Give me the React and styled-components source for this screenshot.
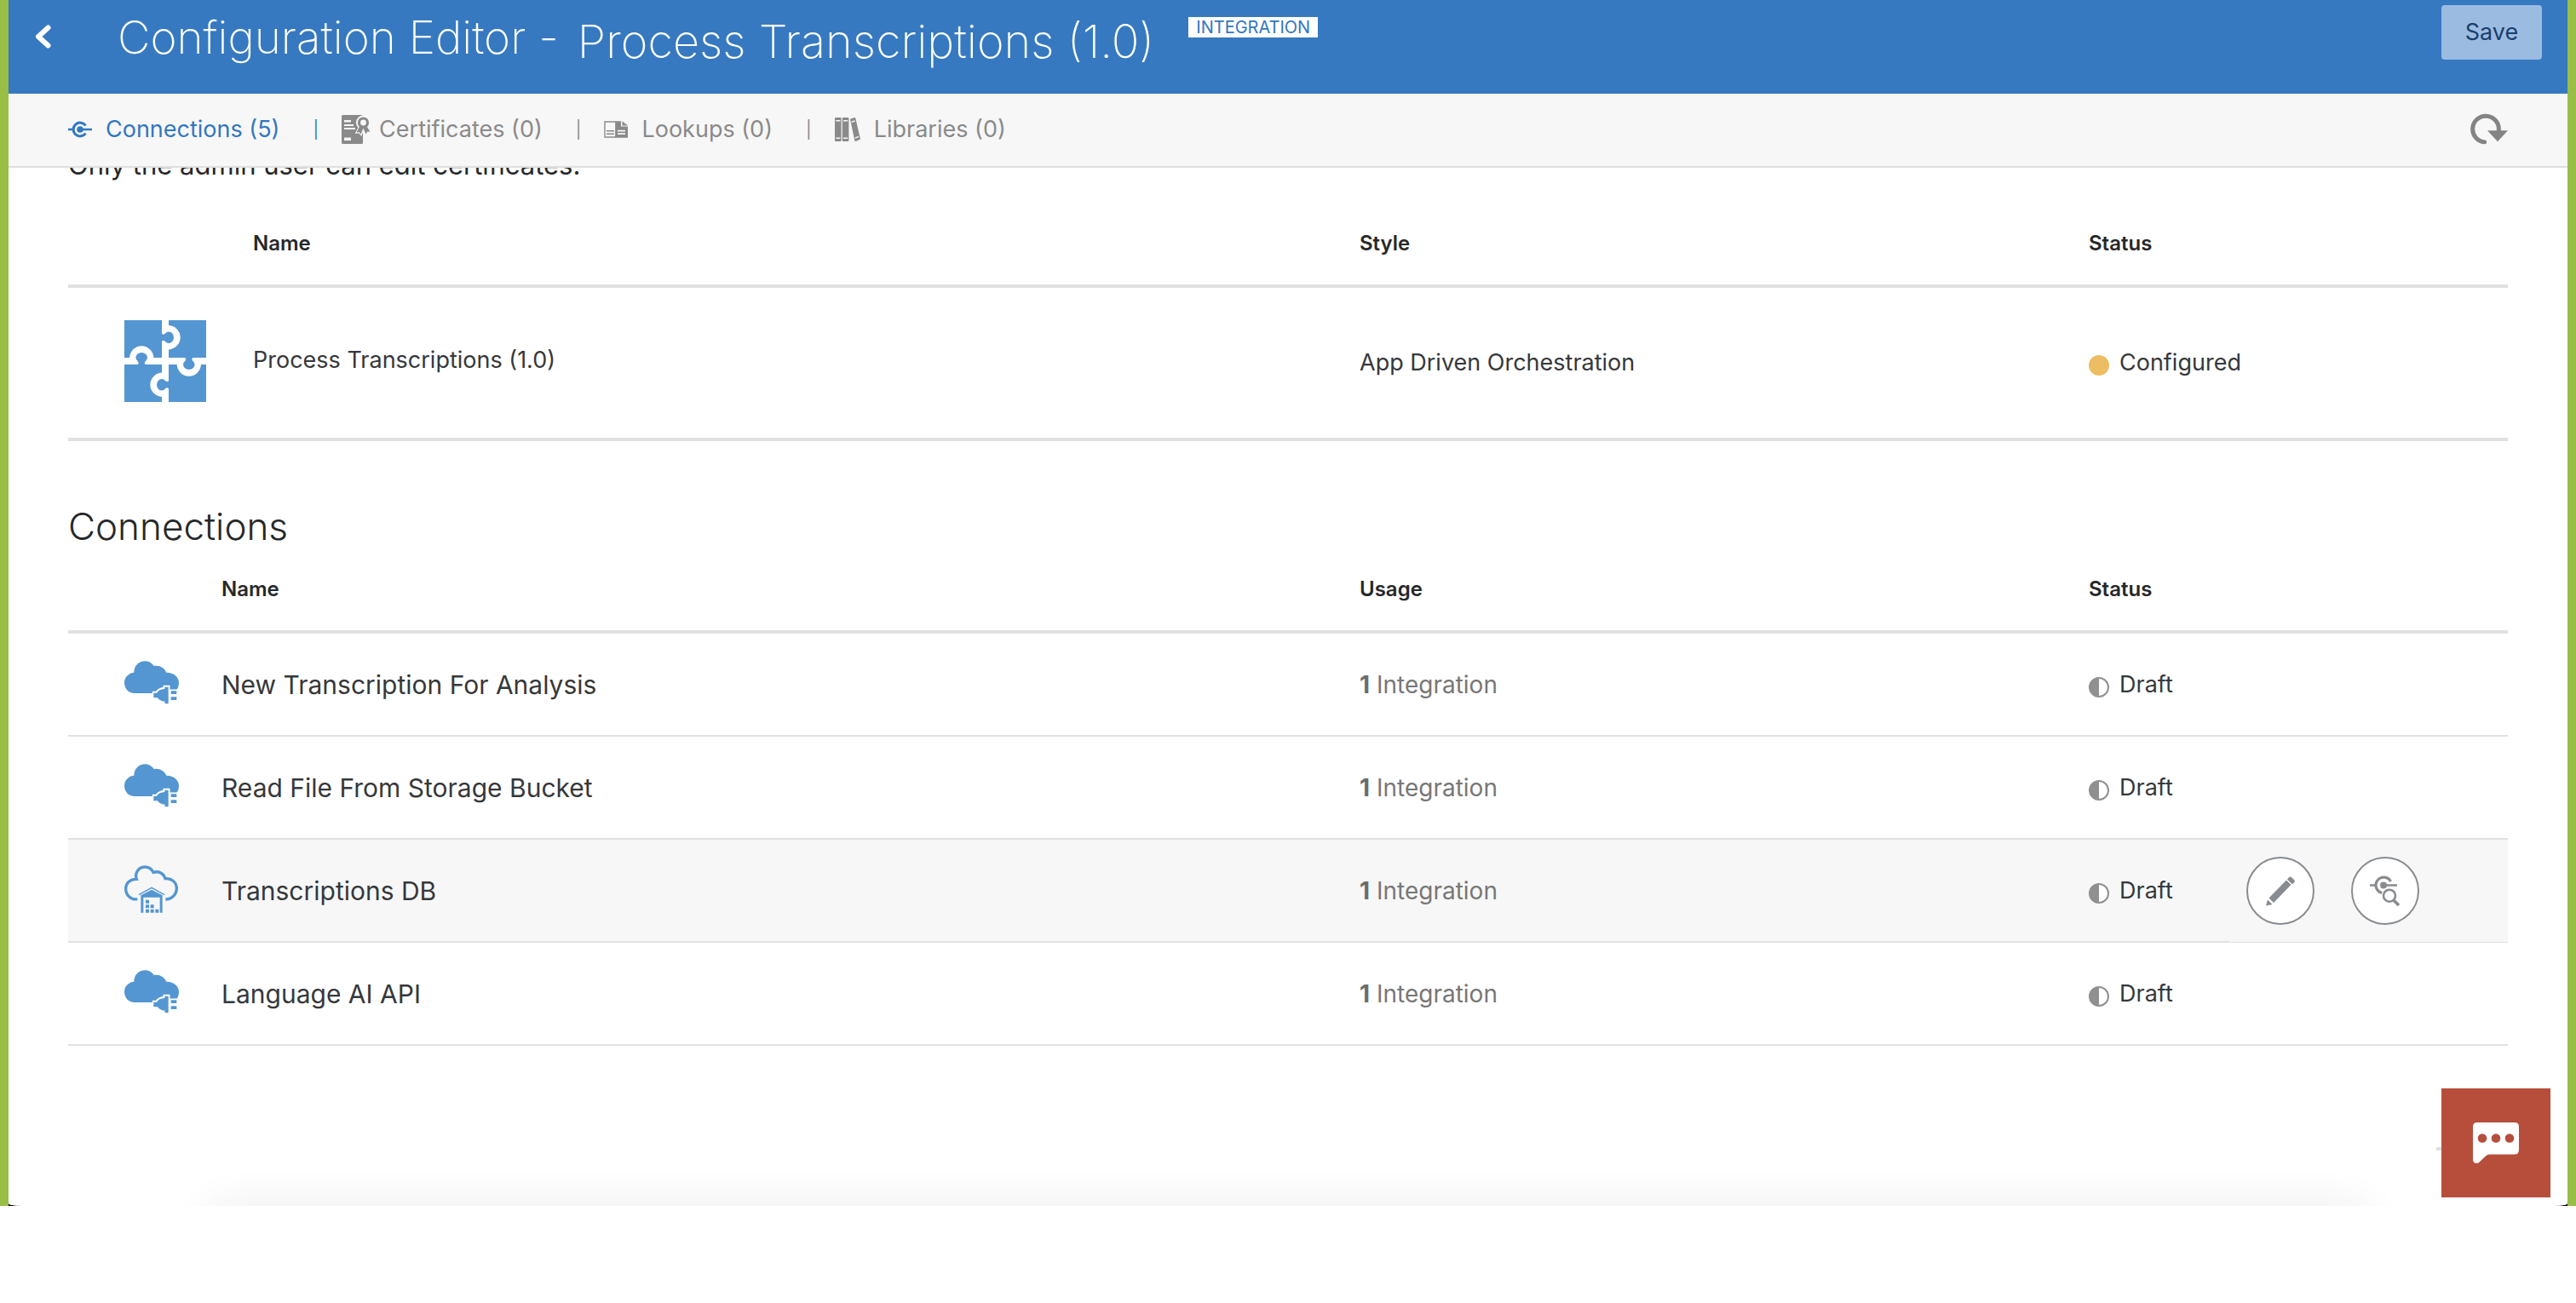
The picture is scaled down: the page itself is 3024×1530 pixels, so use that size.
import React from 'react';
import styled, { createGlobalStyle } from 'styled-components';

const color = {
  brand: '#3679c0',
  link: '#3177c1',
  edge: '#98be45',
  rule: '#e0e1e1',
  bar: '#f7f7f7',
  ink: '#262829',
  text: '#36383a',
  muted: '#8a8a8a',
  icon: '#5496d1',
  control: '#888c90',
};

const GlobalStyle = createGlobalStyle`
  *, *::before, *::after { box-sizing: border-box; }
  body {
    margin: 0;
    background: #fff;
    color: ${color.text};
    font-family: Inter, Roboto, "Liberation Sans", sans-serif;
    font-size: 27px;
    line-height: 36px;
  }
  svg { display: block; flex: none; }
`;

const Frame = styled.div`
  border: solid ${color.edge};
  border-width: 0 10px;
  background: #000;
`;

const Page = styled.div`
  position: relative;
  overflow: hidden;
  background: #fff;
  border-radius: 0 0 14px 14px / 0 0 3px 3px;

  &::after {
    content: '';
    position: absolute;
    left: 230px;
    right: 230px;
    top: 100%;
    height: 60px;
    border-radius: 30px;
    box-shadow: 0 0 50px rgba(0, 0, 0, 0.08);
  }
`;

const Header = styled.header`
  display: flex;
  align-items: flex-start;
  height: 110px;
  padding: 0 30px;
  background: ${color.brand};
  color: #fff;
`;

const BackButton = styled.button`
  padding: 0;
  margin: 29px 78px 0 0;
  border: 0;
  background: none;
`;

const Title = styled.h1`
  display: flex;
  align-items: flex-start;
  gap: 22px;
  margin: 0;
  font-size: 53px;
  font-weight: 200;
  line-height: 88px;
  white-space: nowrap;
`;

const TitleName = styled.span`
  font-size: 54px;
  line-height: 98px;
`;

const Badge = styled.span`
  margin: 20px 0 0 40px;
  padding: 0 9px;
  background: #fff;
  color: ${color.link};
  font-size: 20px;
  line-height: 24px;
`;

const SaveButton = styled.button`
  width: 118px;
  height: 64px;
  margin: 6px 0 0 auto;
  padding: 0;
  border: 0;
  border-radius: 4px;
  background: #9bbbe1;
  color: #173f69;
  font: inherit;
`;

const Nav = styled.nav`
  display: flex;
  align-items: center;
  height: 87px;
  padding: 0 70px 2px;
  background: ${color.bar};
  border-bottom: 2px solid #dedfdf;
`;

const NavLink = styled.a`
  display: flex;
  align-items: center;
  gap: ${(p) => (p.$tight ? 10 : 16)}px;
  color: ${(p) => (p.$active ? color.link : color.muted)};
  text-decoration: none;
  white-space: nowrap;
`;

const Divider = styled.span`
  margin: 0 27px 0 39px;
  color: ${(p) => (p.$active ? color.link : color.muted)};
  font-size: 20px;
`;

const RefreshButton = styled.button`
  margin-left: auto;
  padding: 0;
  border: 0;
  background: none;
`;

const Main = styled.main`
  overflow: hidden;
  padding: 0 70px 188px;
`;

const Note = styled.p`
  margin: -21px 0 26px;
  color: ${color.ink};
  font-size: 31px;
  line-height: 36px;
`;

const SectionTitle = styled.h2`
  margin: 74px 0 0;
  color: ${color.ink};
  font-size: 44px;
  font-weight: 300;
  line-height: 52px;
`;

const Table = styled.table`
  width: 100%;
  table-layout: fixed;
  border-collapse: separate;
  border-spacing: 0;
`;

const Col = styled.col`
  width: ${(p) => p.$w};
`;

const HeadCell = styled.th`
  height: 100px;
  padding: 0;
  border-bottom: 4px solid ${color.rule};
  color: ${color.ink};
  font-size: 24px;
  font-weight: 600;
  text-align: left;
`;

const Row = styled.tr`
  background: ${(p) => (p.$active ? color.bar : 'transparent')};
`;

const Cell = styled.td`
  height: ${(p) => (p.$tall ? 180 : 121)}px;
  padding: 0;
  border-bottom: ${(p) => (p.$tall ? 4 : 2)}px solid ${color.rule};
`;

const IconCell = styled(Cell)`
  padding: 0 0 4px 66px;
`;

const TallNameCell = styled(Cell)`
  padding-bottom: 6px;
`;

const NameCell = styled(Cell)`
  font-size: 30px;
`;

const UsageCell = styled(Cell)`
  color: #777;
  font-size: 28px;

  b { color: #6c6c6c; }
`;

const ActionCell = styled(Cell)`
  border-bottom-width: ${(p) => (p.$active ? 1 : 2)}px;
`;

const Status = styled.span`
  display: flex;
  align-items: center;
  gap: 12px;
`;

const Dot = styled.span`
  width: 24px;
  height: 24px;
  margin-top: 6px;
  border-radius: 50%;
  ${(p) =>
    p.$draft
      ? `border: 2px solid #8f9091;
         background: linear-gradient(to right, #8f9091 50%, #fff 50%) border-box;`
      : 'background: #edbd63;'}
`;

const Actions = styled.div`
  display: flex;
  gap: 43px;
  padding-left: 20px;
`;

const RoundButton = styled.button`
  display: grid;
  place-items: center;
  width: 80px;
  height: 80px;
  padding: 0;
  border: 2px solid ${color.control};
  border-radius: 50%;
  background: #fff;
`;

const ChatButton = styled.button`
  position: absolute;
  right: 20px;
  bottom: 10px;
  display: grid;
  place-items: center;
  width: 128px;
  height: 128px;
  padding: 0;
  border: 0;
  background: #b74e3b;

  &::before {
    content: '';
    position: absolute;
    left: -6px;
    top: 69px;
    width: 6px;
    height: 4px;
    background: #dfdfdf;
  }
`;

const BackIcon = () => (
  <svg width="20" height="28" viewBox="0 0 20 28" fill="none" stroke="#fff" strokeWidth="6" strokeLinecap="round" strokeLinejoin="round">
    <path d="M16.500 3.500 5 14l11.500 10.500" />
  </svg>
);

const ConnectionIcon = () => (
  <svg width="28" height="20" viewBox="0 0 28 20" fill="none" stroke="currentColor" strokeWidth="3">
    <path d="M20.500 5.500A7.900 7.900 0 1 0 20.500 14.500" />
    <path d="M0 10H6M14 10H28" strokeWidth="2.600" />
    <circle cx="14" cy="10" r="3.800" fill="currentColor" stroke="none" />
  </svg>
);

const CertificateIcon = () => (
  <svg width="34" height="34" viewBox="0 0 34 34" fill="currentColor">
    <rect width="25" height="34" rx="1.500" />
    <path d="M3 6h8v2.600H3zM3 11h11v2H3zM3 15h13v2H3zM3 26.500h8v3.500H3z" fill={color.bar} />
    <g stroke={color.bar} strokeWidth="4" fill={color.bar}>
      <circle cx="25.500" cy="9" r="6.500" />
      <path d="M21 13 17 21l3.500-.5 2.500 3 2.500-7 2.500 7 2-4 3.500-.5-4-6z" strokeWidth="1.500" />
    </g>
    <circle cx="25.500" cy="9" r="5" fill="none" stroke="currentColor" strokeWidth="3.200" />
    <path d="M21 13.500 17.500 20.500l3.200-.4 1.800 2.600 3-7.200 3 7.200 1.600-3.200 3.400.2-3.700-6z" />
  </svg>
);

const LookupIcon = () => (
  <svg width="28" height="20" viewBox="0 0 28 20" fill="currentColor">
    <path d="M1 1h13v18H1z" fill="none" stroke="currentColor" strokeWidth="1.400" />
    <path d="M13.500.3H20v6.200h8v13.200H13.500zM21.500.3 28 5.500h-6.500z" />
    <path d="M3 11h9v1.400H3zM3 14.500h9v1.400H3z" />
    <path d="M16 10.800h9v1.800h-9zM16 14.300h9v1.800h-9z" fill={color.bar} />
  </svg>
);

const LibraryIcon = () => (
  <svg width="30" height="28" viewBox="0 0 30 28" fill="currentColor">
    <rect width="7.600" height="28" rx="1" />
    <rect x="8.800" width="7.600" height="28" rx="1" />
    <path d="m18 1.800 5.200-1.700q1 0 1.200 1L30 25.500l-5.500 2.400q-1-.2-1.200-1z" />
    <path d="M1.200 3h5.200v1.500H1.200zM1.200 23.500h5.200V25H1.200zM10 3h5.200v1.500H10zM10 23.500h5.200V25H10zM19.500 4.500l4-1.200.3 1.500-4 1.200zM23.600 23.200l4.200-1.400.3 1.500-4.200 1.400z" fill={color.bar} />
  </svg>
);

const RefreshIcon = () => (
  <svg width="44" height="37" viewBox="449 392 132 110">
    <path d="M499 493A46 46 0 1 1 549 447V456" fill="none" stroke="#848484" strokeWidth="15" strokeLinecap="round" />
    <path d="M509 452H581L545 491Z" fill="#848484" />
  </svg>
);

const PuzzleIcon = () => (
  <svg width="96" height="96" viewBox="0 0 96 96">
    <rect width="96" height="96" fill={color.icon} />
    <path d="M44 0h8v96h-8zM0 44h96v8H0z" fill="#fff" />
    {[0, 90, 180, 270].map((angle) => (
      <g key={angle} transform={`rotate(${angle} 48 48)`}>
        <path d="M6 45a14.200 14.700 0 0 1 28.400 0z" fill="#fff" />
        <path d="M15 52.500q3-2 .5-4.500a6.800 5.800 0 1 1 9.400 0q-2.500 2.500.5 4.500z" fill={color.icon} />
      </g>
    ))}
  </svg>
);

const CloudPlugIcon = () => (
  <svg width="64" height="51" viewBox="78 536 192 153" fill={color.icon}>
    <path d="M114 650C93 650 78 633 78 613 78 593 94 578 112 577 112 553 130 537 150 537 164 537 175 543 182 554 201 550 219 560 226 577 250 576 270 592 270 613 270 625 266 635 258 642L200 650Z" />
    <g stroke="#fff" strokeWidth="13">
      <path d="M183 650H193C197 640 206 636 221 635V629H232V687H222V679C208 678 200 674 195 665H183Z" />
      <path d="M242 643H262V652H242ZM242 664H262V673H242Z" />
    </g>
    <path d="M181 649H192C197 640 206 636 220 635V628H233V687H221V679C208 678 200 674 195 666H181Z" />
    <path d="M242 642H262V653H242ZM242 663H262V674H242Z" />
  </svg>
);

const CloudDatabaseIcon = () => (
  <svg width="63" height="56" viewBox="78 161 189 168" fill={color.icon}>
    <path
      d="M124 280C101 284 83 266 83 244 83 223 99 209 121 210 113 186 130 167 150 167 164 167 174 174 180 186 200 180 216 190 222 208 245 206 262 222 262 243 262 264 245 281 223 281"
      fill="none"
      stroke={color.icon}
      strokeWidth="10"
    />
    <path d="M129 265 174 240 219 265" fill="none" stroke={color.icon} strokeWidth="4" />
    <path d="M136 267 174 247 212 267V328H203V274H145V328H136Z" />
    <path d="M153 283h12v12h-12zM153 300h12v12h-12zM170 300h12v12h-12zM153 316h12v12h-12zM170 316h12v12h-12zM187 316h12v12h-12z" />
  </svg>
);

const PencilIcon = () => (
  <svg width="34" height="35" viewBox="0 0 34 35" fill={color.control}>
    <path d="M0 34.500 2 27.500 7.500 33ZM3.500 25.500 24 4.500 29.500 10 9 31ZM25 3.500 27 1.300Q28.500-.3 30.200 1.300L33.200 4.300Q34.500 5.800 33 7.400L30.700 9.200Z" />
  </svg>
);

const TestIcon = () => (
  <svg width="36" height="36" viewBox="0 0 36 36" fill="none" stroke={color.control}>
    <path d="M24.500 7A9.300 9.300 0 1 0 15 20.600" strokeWidth="3.200" />
    <path d="M0 11.500H7M16 11.500H32" strokeWidth="2.600" />
    <circle cx="16" cy="11.500" r="4" fill={color.control} stroke="none" />
    <circle cx="23" cy="23.700" r="8.500" fill="#fff" stroke="#fff" strokeWidth="2" />
    <circle cx="23" cy="23.700" r="7" strokeWidth="2.600" />
    <path d="M28.200 29.200 34 35" strokeWidth="3.600" />
  </svg>
);

const ChatIcon = () => (
  <svg width="54" height="48" viewBox="0 0 54 48" fill="#fff">
    <path d="M5 0H49Q54 0 54 5V32Q54 37.500 49 37.500H19Q17 37.500 15.500 39L7 47Q4 49 1.500 47 0 46 0 44V5Q0 0 5 0Z" />
    <g fill="#b74e3b">
      <circle cx="11" cy="18.500" r="5.300" />
      <circle cx="27" cy="18.500" r="5.300" />
      <circle cx="43" cy="18.500" r="5.300" />
    </g>
  </svg>
);

const tabs = [
  { label: 'Connections (5)', Icon: ConnectionIcon, active: true },
  { label: 'Certificates (0)', Icon: CertificateIcon, tight: true },
  { label: 'Lookups (0)', Icon: LookupIcon },
  { label: 'Libraries (0)', Icon: LibraryIcon },
];

const connections = [
  { name: 'New Transcription For Analysis', Icon: CloudPlugIcon },
  { name: 'Read File From Storage Bucket', Icon: CloudPlugIcon },
  { name: 'Transcriptions DB', Icon: CloudDatabaseIcon, active: true },
  { name: 'Language AI API', Icon: CloudPlugIcon },
];

export default function App() {
  return (
    <Frame>
      <GlobalStyle />
      <Page>
        <Header>
          <BackButton aria-label="Back"><BackIcon /></BackButton>
          <Title>
            <span>Configuration Editor -</span>
            <TitleName>Process Transcriptions (1.0)</TitleName>
          </Title>
          <Badge>INTEGRATION</Badge>
          <SaveButton>Save</SaveButton>
        </Header>

        <Nav>
          {tabs.map(({ label, Icon, active, tight }, i) => (
            <React.Fragment key={label}>
              {i > 0 && <Divider $active={i === 1}>|</Divider>}
              <NavLink href="#" $active={active} $tight={tight}>
                <Icon />
                {label}
              </NavLink>
            </React.Fragment>
          ))}
          <RefreshButton aria-label="Refresh"><RefreshIcon /></RefreshButton>
        </Nav>

        <Main>
          <Note>Only the admin user can edit certificates.</Note>
          <Table>
            <colgroup>
              <Col $w="217px" />
              <Col />
              <Col $w="856px" />
              <Col $w="492px" />
            </colgroup>
            <thead>
              <tr>
                <HeadCell as="td" />
                <HeadCell>Name</HeadCell>
                <HeadCell>Style</HeadCell>
                <HeadCell>Status</HeadCell>
              </tr>
            </thead>
            <tbody>
              <Row>
                <IconCell $tall><PuzzleIcon /></IconCell>
                <TallNameCell $tall>Process Transcriptions (1.0)</TallNameCell>
                <Cell $tall>App Driven Orchestration</Cell>
                <Cell $tall><Status><Dot />Configured</Status></Cell>
              </Row>
            </tbody>
          </Table>

          <SectionTitle>Connections</SectionTitle>
          <Table>
            <colgroup>
              <Col $w="180px" />
              <Col />
              <Col $w="856px" />
              <Col $w="165px" />
              <Col $w="327px" />
            </colgroup>
            <thead>
              <tr>
                <HeadCell as="td" />
                <HeadCell>Name</HeadCell>
                <HeadCell>Usage</HeadCell>
                <HeadCell>Status</HeadCell>
                <HeadCell as="td" />
              </tr>
            </thead>
            <tbody>
              {connections.map(({ name, Icon, active }) => (
                <Row key={name} $active={active}>
                  <IconCell><Icon /></IconCell>
                  <NameCell>{name}</NameCell>
                  <UsageCell><b>1</b> Integration</UsageCell>
                  <Cell><Status><Dot $draft />Draft</Status></Cell>
                  <ActionCell $active={active}>
                    {active && (
                      <Actions>
                        <RoundButton aria-label="Edit"><PencilIcon /></RoundButton>
                        <RoundButton aria-label="Test connection"><TestIcon /></RoundButton>
                      </Actions>
                    )}
                  </ActionCell>
                </Row>
              ))}
            </tbody>
          </Table>
        </Main>

        <ChatButton aria-label="Open chat"><ChatIcon /></ChatButton>
      </Page>
    </Frame>
  );
}
